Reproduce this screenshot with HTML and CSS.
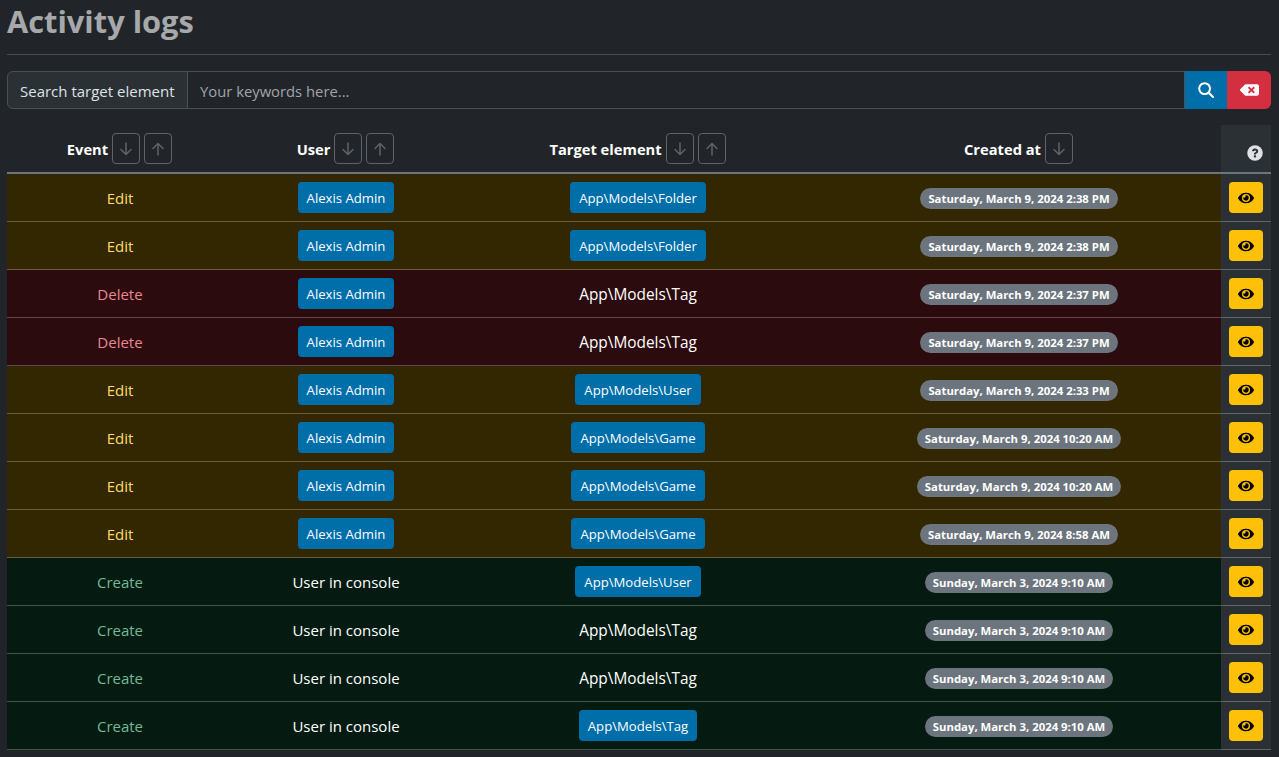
FILE: index.html
```html
<!DOCTYPE html>
<html lang="en">
<head>
    <meta charset="UTF-8">
    <meta name="viewport" content="width=device-width, initial-scale=1.0">
    <title>Activity logs</title>
    <link rel="stylesheet" href="styles.css">
</head>
<body>

    <svg class="sprites" aria-hidden="true">
        <symbol id="i-down" viewBox="0 0 16 16"><path d="M8 2v11.5M3 8.5l5 5 5-5"/></symbol>
        <symbol id="i-up" viewBox="0 0 16 16"><path d="M8 14V2.5M3 7.5l5-5 5 5"/></symbol>
        <symbol id="i-eye" viewBox="0 0 576 512"><path d="M572.52 241.4C518.29 135.59 410.93 64 288 64S57.68 135.64 3.48 241.41a32.35 32.35 0 0 0 0 29.19C57.71 376.41 165.07 448 288 448s230.32-71.64 284.52-177.41a32.35 32.35 0 0 0 0-29.19zM288 400a144 144 0 1 1 144-144 143.93 143.93 0 0 1-144 144zm0-240a95.31 95.31 0 0 0-25.31 3.79 47.85 47.85 0 0 1-66.9 66.9A95.78 95.78 0 1 0 288 160z"/></symbol>
    </svg>

    <h1 class="title">Activity logs</h1>
    <hr class="rule">

    <form class="search">
        <label class="search-label" for="keywords">Search target element</label>
        <input class="search-input" type="text" id="keywords" placeholder="Your keywords here...">
        <button class="search-btn go" type="button" aria-label="Search">
            <svg viewBox="0 0 16 16" width="16" height="16" fill="none" stroke="currentColor" stroke-width="2" stroke-linecap="round"><circle cx="6.6" cy="6.6" r="5.4"/><path d="M10.7 10.7 15 15"/></svg>
        </button>
        <button class="search-btn clear" type="button" aria-label="Clear">
            <svg viewBox="0 0 640 512" width="19" height="16" fill="currentColor"><path d="M576 64H205.26A63.97 63.97 0 0 0 160 82.75L9.37 233.37c-12.5 12.5-12.5 32.76 0 45.25L160 429.25c12 12 28.28 18.75 45.25 18.75H576c35.35 0 64-28.65 64-64V128c0-35.35-28.65-64-64-64zm-84.69 254.06c6.25 6.25 6.25 16.38 0 22.63l-22.62 22.62c-6.25 6.25-16.38 6.25-22.63 0L384 301.25l-62.06 62.06c-6.25 6.25-16.38 6.25-22.63 0l-22.62-22.62c-6.25-6.25-6.25-16.38 0-22.63L338.75 256l-62.06-62.06c-6.25-6.25-6.25-16.38 0-22.63l22.62-22.62c6.25-6.25 16.38-6.25 22.63 0L384 210.75l62.06-62.06c6.25-6.25 16.38-6.25 22.63 0l22.62 22.62c6.25 6.25 6.25 16.38 0 22.63L429.25 256l62.06 62.06z"/></svg>
        </button>
    </form>

    <table class="logs">
        <colgroup>
            <col class="col-event">
            <col class="col-user">
            <col class="col-target">
            <col class="col-date">
            <col class="col-action">
        </colgroup>
        <thead>
            <tr>
                <th><div class="head">Event <button class="sort"><svg><use href="#i-down"/></svg></button><button class="sort"><svg><use href="#i-up"/></svg></button></div></th>
                <th><div class="head">User <button class="sort"><svg><use href="#i-down"/></svg></button><button class="sort"><svg><use href="#i-up"/></svg></button></div></th>
                <th><div class="head">Target element <button class="sort"><svg><use href="#i-down"/></svg></button><button class="sort"><svg><use href="#i-up"/></svg></button></div></th>
                <th><div class="head">Created at <button class="sort"><svg><use href="#i-down"/></svg></button></div></th>
                <th class="action help">
                    <svg viewBox="0 0 512 512" width="16" height="16"><circle cx="256" cy="256" r="248" fill="currentColor"/><path class="help-mark" transform="translate(38 38) scale(.85)" d="M262.655 90c-54.497 0-89.255 22.957-116.549 63.758-3.536 5.286-2.353 12.415 2.715 16.258l34.699 26.31c5.205 3.947 12.621 3.008 16.665-2.122 17.864-22.658 30.113-35.797 57.303-35.797 20.429 0 45.698 13.148 45.698 32.958 0 14.976-12.363 22.667-32.534 33.976C247.128 238.528 216 254.941 216 296v4c0 6.627 5.373 12 12 12h56c6.627 0 12-5.373 12-12v-1.333c0-28.462 83.186-29.647 83.186-106.667 0-58.002-60.165-102-116.531-102zM256 338c-25.365 0-46 20.635-46 46 0 25.364 20.635 46 46 46s46-20.636 46-46c0-25.365-20.635-46-46-46z"/></svg>
                </th>
            </tr>
        </thead>
        <tbody>
            <tr class="edit">
                <td class="event">Edit</td>
                <td><a class="tag">Alexis Admin</a></td>
                <td><a class="tag">App\Models\Folder</a></td>
                <td><span class="date">Saturday, March 9, 2024 2:38 PM</span></td>
                <td class="action"><button class="view"><svg><use href="#i-eye"/></svg></button></td>
            </tr>
            <tr class="edit">
                <td class="event">Edit</td>
                <td><a class="tag">Alexis Admin</a></td>
                <td><a class="tag">App\Models\Folder</a></td>
                <td><span class="date">Saturday, March 9, 2024 2:38 PM</span></td>
                <td class="action"><button class="view"><svg><use href="#i-eye"/></svg></button></td>
            </tr>
            <tr class="delete">
                <td class="event">Delete</td>
                <td><a class="tag">Alexis Admin</a></td>
                <td class="target">App\Models\Tag</td>
                <td><span class="date">Saturday, March 9, 2024 2:37 PM</span></td>
                <td class="action"><button class="view"><svg><use href="#i-eye"/></svg></button></td>
            </tr>
            <tr class="delete">
                <td class="event">Delete</td>
                <td><a class="tag">Alexis Admin</a></td>
                <td class="target">App\Models\Tag</td>
                <td><span class="date">Saturday, March 9, 2024 2:37 PM</span></td>
                <td class="action"><button class="view"><svg><use href="#i-eye"/></svg></button></td>
            </tr>
            <tr class="edit">
                <td class="event">Edit</td>
                <td><a class="tag">Alexis Admin</a></td>
                <td><a class="tag">App\Models\User</a></td>
                <td><span class="date">Saturday, March 9, 2024 2:33 PM</span></td>
                <td class="action"><button class="view"><svg><use href="#i-eye"/></svg></button></td>
            </tr>
            <tr class="edit">
                <td class="event">Edit</td>
                <td><a class="tag">Alexis Admin</a></td>
                <td><a class="tag">App\Models\Game</a></td>
                <td><span class="date">Saturday, March 9, 2024 10:20 AM</span></td>
                <td class="action"><button class="view"><svg><use href="#i-eye"/></svg></button></td>
            </tr>
            <tr class="edit">
                <td class="event">Edit</td>
                <td><a class="tag">Alexis Admin</a></td>
                <td><a class="tag">App\Models\Game</a></td>
                <td><span class="date">Saturday, March 9, 2024 10:20 AM</span></td>
                <td class="action"><button class="view"><svg><use href="#i-eye"/></svg></button></td>
            </tr>
            <tr class="edit">
                <td class="event">Edit</td>
                <td><a class="tag">Alexis Admin</a></td>
                <td><a class="tag">App\Models\Game</a></td>
                <td><span class="date">Saturday, March 9, 2024 8:58 AM</span></td>
                <td class="action"><button class="view"><svg><use href="#i-eye"/></svg></button></td>
            </tr>
            <tr class="create">
                <td class="event">Create</td>
                <td>User in console</td>
                <td><a class="tag">App\Models\User</a></td>
                <td><span class="date">Sunday, March 3, 2024 9:10 AM</span></td>
                <td class="action"><button class="view"><svg><use href="#i-eye"/></svg></button></td>
            </tr>
            <tr class="create">
                <td class="event">Create</td>
                <td>User in console</td>
                <td class="target">App\Models\Tag</td>
                <td><span class="date">Sunday, March 3, 2024 9:10 AM</span></td>
                <td class="action"><button class="view"><svg><use href="#i-eye"/></svg></button></td>
            </tr>
            <tr class="create">
                <td class="event">Create</td>
                <td>User in console</td>
                <td class="target">App\Models\Tag</td>
                <td><span class="date">Sunday, March 3, 2024 9:10 AM</span></td>
                <td class="action"><button class="view"><svg><use href="#i-eye"/></svg></button></td>
            </tr>
            <tr class="create">
                <td class="event">Create</td>
                <td>User in console</td>
                <td><a class="tag">App\Models\Tag</a></td>
                <td><span class="date">Sunday, March 3, 2024 9:10 AM</span></td>
                <td class="action"><button class="view"><svg><use href="#i-eye"/></svg></button></td>
            </tr>
        </tbody>
    </table>

</body>
</html>
```

FILE: styles.css
```css
body {
    margin: 0;
    padding: 0 8px 0 7px;
    background-color: #212529;
    color: #dee2e6;
    font-family: "Open Sans", "Liberation Sans", sans-serif;
    font-size: 15px;
    overflow: hidden;
}

.sprites {
    display: none;
}

.title {
    margin: 0;
    height: 54px;
    font-size: 30.8px;
    line-height: 42px;
    font-weight: 700;
    color: #a6a8ab;
}

.rule {
    margin: 0 0 16px;
    border: none;
    border-top: 1px solid #494d51;
}

.search {
    display: flex;
    height: 38px;
}

.search-label {
    display: flex;
    align-items: center;
    padding: 1px 12px 0;
    width: 181px;
    box-sizing: border-box;
    background-color: #2b3035;
    border: 1px solid #495057;
    border-radius: 6px 0 0 6px;
    white-space: nowrap;
}

.search-input {
    flex: 1;
    min-width: 0;
    padding: 1px 12px 0;
    margin-left: -1px;
    background-color: #212529;
    border: 1px solid #495057;
    color: #dee2e6;
    font: inherit;
    font-size: 14.8px;
    outline: none;
}

.search-input::placeholder {
    color: #a0a4a8;
}

.search-btn {
    display: flex;
    align-items: center;
    justify-content: center;
    padding: 0;
    border: none;
    color: #fff;
}

.search-btn.go {
    width: 42px;
    background-color: #006ea8;
}

.search-btn.clear {
    width: 44px;
    background-color: #d32f40;
    border-radius: 0 6px 6px 0;
}

.logs {
    width: 100%;
    margin-top: 16px;
    border-collapse: collapse;
    table-layout: fixed;
}

.col-event, .col-user {
    width: 226px;
}

.col-target {
    width: 358px;
}

.col-action {
    width: 50px;
}

.logs th {
    height: 47px;
    padding: 8px;
    box-sizing: border-box;
    color: #fff;
    font-size: 14.7px;
    font-weight: 700;
    border-bottom: 2px solid #6c757d;
}

.head {
    display: flex;
    align-items: center;
    justify-content: center;
    gap: 4px;
    padding-right: 1px;
}

.sort {
    display: flex;
    align-items: center;
    justify-content: center;
    width: 28px;
    height: 31px;
    padding: 0;
    background: none;
    border: 1px solid #5c636a;
    border-radius: 4px;
    color: #5c636a;
}

.sort svg {
    width: 16px;
    height: 16px;
    fill: none;
    stroke: currentColor;
    stroke-width: 1.5;
    stroke-linecap: round;
    stroke-linejoin: round;
}

.logs td {
    height: 48px;
    padding: 8px;
    box-sizing: border-box;
    text-align: center;
    color: #fff;
    border-bottom: 1px solid rgba(255, 255, 255, 0.25);
}

.edit td {
    background-color: #332701;
}

.delete td {
    background-color: #2c0b0e;
}

.create td {
    background-color: #051b11;
}

.logs td.target {
    padding-top: 10px;
    font-size: 15.4px;
}

.logs .edit .event {
    color: #ffda6a;
}

.logs .delete .event {
    color: #ea868f;
}

.logs .create .event {
    color: #75b798;
}

.tag {
    display: inline-block;
    padding: 0 9px;
    height: 31px;
    line-height: 33px;
    vertical-align: middle;
    background-color: #006ea8;
    border-radius: 4px;
    font-size: 13.15px;
    color: #fff;
}

.date {
    display: inline-block;
    margin-top: 2px;
    padding: 0 8px;
    height: 21px;
    line-height: 22px;
    vertical-align: middle;
    background-color: #6c757d;
    border-radius: 11px;
    font-size: 11.35px;
    font-weight: 700;
    color: #fff;
}

.logs .action {
    background-color: #2b3035;
    text-align: center;
}

.logs .help {
    padding: 12px 8px 0;
    text-align: right;
    color: #dee2e6;
}

.help-mark {
    fill: #2b3035;
}

.view {
    display: block;
    width: 34px;
    height: 31px;
    margin: 0 auto;
    padding: 0;
    background-color: #ffc107;
    border: none;
    border-radius: 4px;
    color: #000;
}

.view svg {
    display: block;
    width: 16px;
    height: 16px;
    margin: 0 auto;
    fill: currentColor;
}
```
